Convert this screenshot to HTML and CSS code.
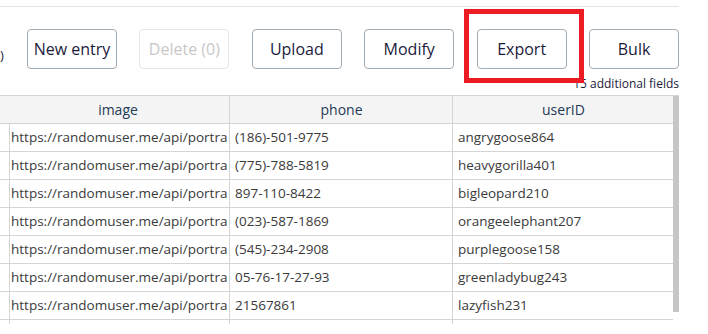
FILE: index.html
```html
<!DOCTYPE html>
<html lang="en">
<head>
  <meta charset="UTF-8" />
  <title>Entries</title>
  <link rel="stylesheet" href="styles.css">
</head>
<body>
  <div class="frame">
    <div class="toolbar">
      <span class="count">)</span>
      <button class="btn">New entry</button>
      <button class="btn" disabled>Delete (0)</button>
      <button class="btn">Upload</button>
      <button class="btn">Modify</button>
      <button class="btn">Export</button>
      <button class="btn">Bulk</button>
    </div>
    <div class="note">15 additional fields</div>

    <!-- annotation drawn over the screenshot -->
    <div class="highlight"></div>

    <div class="table-wrap">
      <div class="grid">
        <div class="cell head"></div>
        <div class="cell head">image</div>
        <div class="cell head">phone</div>
        <div class="cell head">userID</div>

        <div class="cell"></div>
        <div class="cell">https://randomuser.me/api/portra</div>
        <div class="cell">(186)-501-9775</div>
        <div class="cell">angrygoose864</div>

        <div class="cell"></div>
        <div class="cell">https://randomuser.me/api/portra</div>
        <div class="cell">(775)-788-5819</div>
        <div class="cell">heavygorilla401</div>

        <div class="cell"></div>
        <div class="cell">https://randomuser.me/api/portra</div>
        <div class="cell">897-110-8422</div>
        <div class="cell">bigleopard210</div>

        <div class="cell"></div>
        <div class="cell">https://randomuser.me/api/portra</div>
        <div class="cell">(023)-587-1869</div>
        <div class="cell">orangeelephant207</div>

        <div class="cell"></div>
        <div class="cell">https://randomuser.me/api/portra</div>
        <div class="cell">(545)-234-2908</div>
        <div class="cell">purplegoose158</div>

        <div class="cell"></div>
        <div class="cell">https://randomuser.me/api/portra</div>
        <div class="cell">05-76-17-27-93</div>
        <div class="cell">greenladybug243</div>

        <div class="cell"></div>
        <div class="cell">https://randomuser.me/api/portra</div>
        <div class="cell">21567861</div>
        <div class="cell">lazyfish231</div>

        <div class="cell"></div>
        <div class="cell"></div>
        <div class="cell"></div>
        <div class="cell"></div>
      </div>
      <div class="scrollbar"><div class="thumb"></div></div>
    </div>
  </div>
</body>
</html>
```

FILE: styles.css
```css
body {
  margin: 0;
  font-family: "Open Sans", Arial, sans-serif;
  background-color: #ffffff;
  color: #333333;
  overflow: hidden;
}
.frame {
  position: relative;
  width: 679px;
  margin-top: 6px;
  border-top: 1px solid #e3e3e3;
}
/* Button row */
.toolbar {
  display: flex;
  align-items: flex-start;
  gap: 22.5px;
  padding-top: 22px;
}
.count {
  width: 4.5px;
  overflow: visible;
  margin-top: 18px;
  font-size: 13px;
  line-height: 16px;
  color: #1b1b3b;
}
.btn {
  width: 90px;
  height: 40px;
  padding: 0;
  font-family: "Open Sans", Arial, sans-serif;
  font-size: 16px;
  color: #1b1b3b;
  background-color: #ffffff;
  border: 1px solid #a2acb4;
  border-radius: 4px;
}
.btn:disabled {
  color: #c8c8c8;
  border-color: #e6e6e6;
}
.note {
  height: 26px;
  box-sizing: border-box;
  padding-top: 7px;
  text-align: right;
  font-size: 12px;
  line-height: 16px;
  color: #1b1b3b;
}
/* Red annotation box */
.highlight {
  position: absolute;
  left: 464px;
  top: 2px;
  width: 120px;
  height: 74px;
  box-sizing: border-box;
  border: 5px solid #ed1c24;
}
/* Data table */
.table-wrap {
  display: flex;
  height: 228px;
  overflow: hidden;
  border-top: 1px solid #d4d4d4;
}
.grid {
  display: grid;
  grid-template-columns: 6px 224px 223px 220px;
  grid-auto-rows: 28px;
  width: 673px;
}
.cell {
  box-sizing: border-box;
  padding: 0 4px 0 5px;
  border-right: 1px solid #d4d4d4;
  border-bottom: 1px solid #d4d4d4;
  font-size: 13.5px;
  line-height: 27px;
  color: #3a3a3a;
  white-space: nowrap;
  overflow: hidden;
}
.cell:nth-child(4n) {
  border-right: none;
}
.head {
  background-color: #f4f4f4;
  text-align: center;
  font-size: 14px;
  color: #1f3a55;
}
.scrollbar {
  width: 6px;
}
.thumb {
  height: 216px;
  background-color: #c6c6c6;
}
```
